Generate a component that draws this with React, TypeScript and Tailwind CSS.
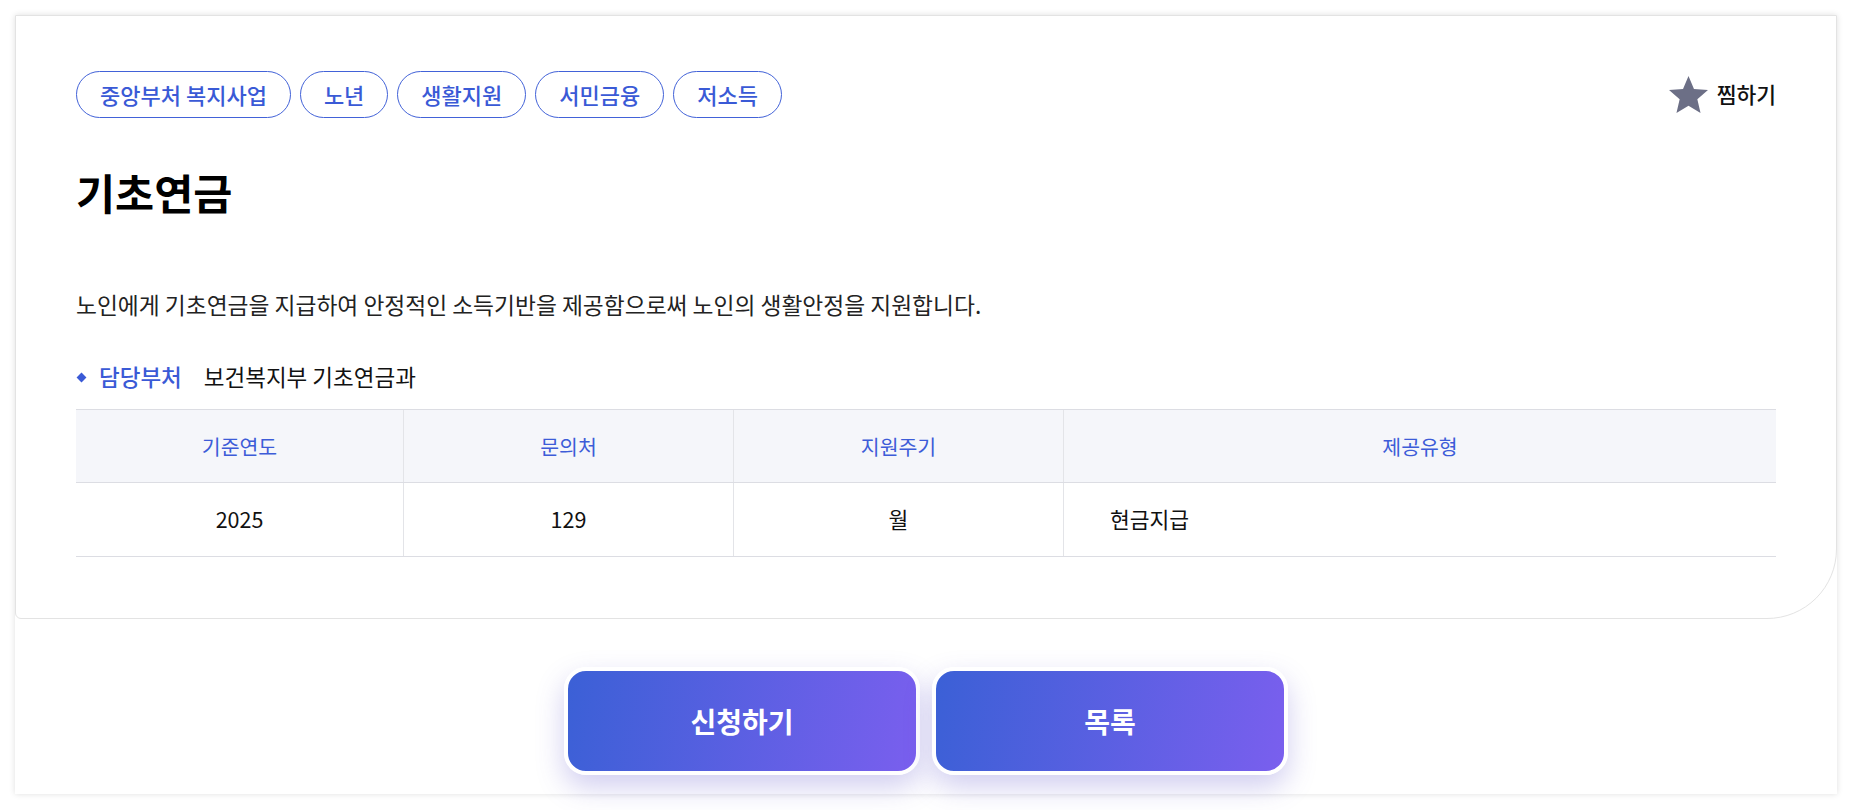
import React from "react";

const tags = ["중앙부처 복지사업", "노년", "생활지원", "서민금융", "저소득"];

function StarIcon() {
  return (
    <svg width="39" height="37" viewBox="2 2 20 19" aria-hidden="true">
      <path
        d="M12 17.27L18.18 21l-1.64-7.03L22 9.24l-7.19-.61L12 2 9.19 8.63 2 9.24l5.46 4.73L5.82 21z"
        fill="#6c6f86"
      />
    </svg>
  );
}

export default function App() {
  return (
    <div
      className="min-h-screen bg-white pt-[15px] pb-[15px]"
      style={{ fontFamily: '"Noto Sans CJK KR", "Noto Sans", sans-serif' }}
    >
      <div className="mx-[15px] bg-white shadow-[0_0_6px_rgba(0,0,0,0.13)]">
        <section className="border border-[#e3e3e3] rounded-br-[70px] rounded-bl-[6px] px-[60px] pt-[55px] pb-[61px]">
          <div className="flex items-center justify-between">
            <div className="flex gap-[9px]">
              {tags.map((t) => (
                <span
                  key={t}
                  className="h-[47px] px-[23px] flex items-center rounded-full border border-[#4262d8] text-[#3a5ad6] text-[22px] font-medium"
                >
                  {t}
                </span>
              ))}
            </div>
            <button className="flex items-center gap-[9px] text-[21.5px] font-medium text-[#111]">
              <StarIcon />
              <span>찜하기</span>
            </button>
          </div>

          <h2 className="mt-[44px] text-[42.5px] leading-[60px] font-bold text-black">기초연금</h2>

          <p className="mt-[67px] text-[22.75px] leading-[32px] text-[#222]">
            노인에게 기초연금을 지급하여 안정적인 소득기반을 제공함으로써 노인의 생활안정을 지원합니다.
          </p>

          <div className="mt-[41px] flex items-center h-[30px] text-[22.5px]">
            <span className="ml-[2px] w-[7px] h-[7px] rotate-45 bg-[#3a5ad6]" />
            <span className="ml-[14px] text-[#3a5ad6] font-medium">담당부처</span>
            <span className="ml-[22px] text-[#111]">보건복지부 기초연금과</span>
          </div>

          <div className="mt-[17px] border-t border-[#dcdde3]">
            <div className="grid grid-cols-[328px_330px_330px_1fr] h-[73px] bg-[#f5f6fa] border-b border-[#dcdde3] text-[20.5px] text-[#3d5cd8]">
              <div className="flex items-center justify-center border-r border-[#e3e4e8]">기준연도</div>
              <div className="flex items-center justify-center border-r border-[#e3e4e8]">문의처</div>
              <div className="flex items-center justify-center border-r border-[#e3e4e8]">지원주기</div>
              <div className="flex items-center justify-center">제공유형</div>
            </div>
            <div className="grid grid-cols-[328px_330px_330px_1fr] h-[74px] border-b border-[#dcdde3] text-[21.5px] text-[#111]">
              <div className="flex items-center justify-center border-r border-[#e3e4e8]">2025</div>
              <div className="flex items-center justify-center border-r border-[#e3e4e8]">129</div>
              <div className="flex items-center justify-center border-r border-[#e3e4e8]">월</div>
              <div className="flex items-center pl-[46px]">현금지급</div>
            </div>
          </div>
        </section>

        <div className="flex justify-center gap-[12px] pt-[48px] pb-[19px]">
          <button className="w-[356px] h-[108px] rounded-[22px] border-4 border-white bg-[linear-gradient(100deg,#3b60d6,#7a5fee)] shadow-[0_12px_28px_rgba(90,80,200,0.28)] text-white text-[28px] font-bold">
            신청하기
          </button>
          <button className="w-[356px] h-[108px] rounded-[22px] border-4 border-white bg-[linear-gradient(100deg,#3b60d6,#7a5fee)] shadow-[0_12px_28px_rgba(90,80,200,0.28)] text-white text-[28px] font-bold">
            목록
          </button>
        </div>
      </div>
    </div>
  );
}
